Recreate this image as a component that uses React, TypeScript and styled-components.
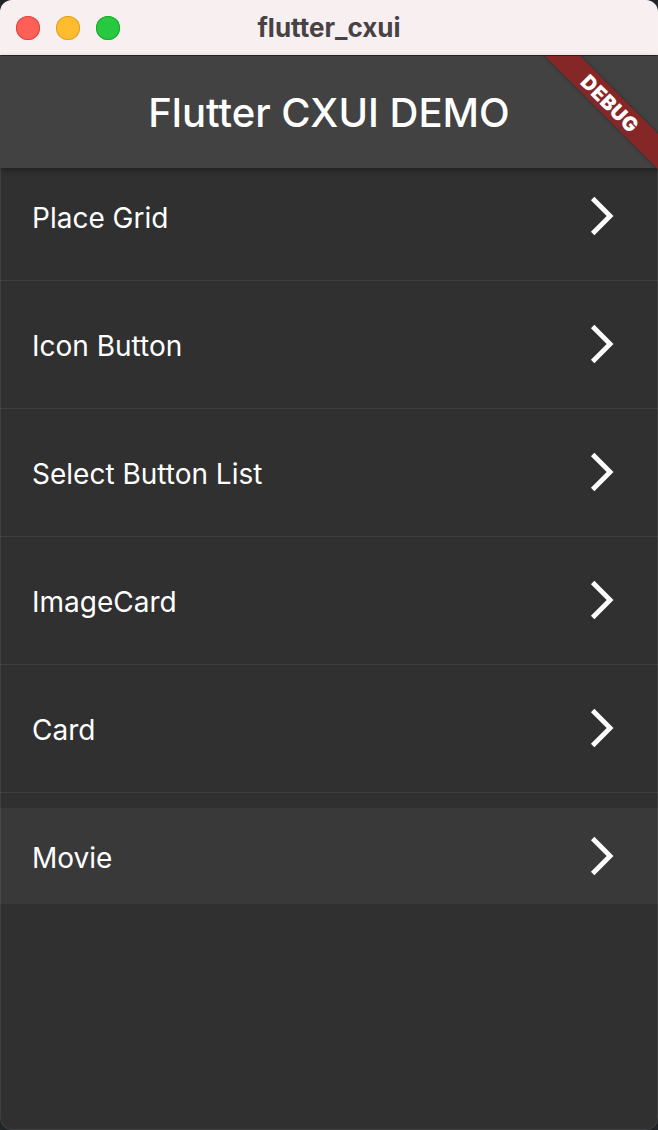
import React from 'react'
import styled, { createGlobalStyle } from 'styled-components'

const GlobalStyle = createGlobalStyle`
  html, body {
    margin: 0;
    padding: 0;
    background: #1f2529;
  }
  body {
    font-family: Inter, 'Noto Sans', sans-serif;
    -webkit-font-smoothing: antialiased;
  }
`

const Window = styled.div`
  position: relative;
  width: 658px;
  height: 1130px;
  border-radius: 12px;
  overflow: hidden;
  display: flex;
  flex-direction: column;
  background: #303030;

  &::after {
    content: '';
    position: absolute;
    inset: 0;
    border-radius: 12px;
    box-shadow: inset 0 0 0 1px rgba(255, 255, 255, 0.08);
    pointer-events: none;
  }
`

const TitleBar = styled.div`
  position: relative;
  height: 55px;
  flex-shrink: 0;
  background: #f8eff1;
  border-bottom: 1px solid #262626;
  display: flex;
  align-items: center;
  justify-content: center;
`

const Lights = styled.div`
  position: absolute;
  left: 16px;
  top: 16px;
  display: flex;
  gap: 16px;
`

const Light = styled.span<{ color: string; edge: string }>`
  width: 24px;
  height: 24px;
  border-radius: 50%;
  background: ${({ color }) => color};
  box-shadow: inset 0 0 0 1px ${({ edge }) => edge};
`

const WindowTitle = styled.div`
  font-size: 26px;
  font-weight: 700;
  color: #474345;
  margin-top: -1px;
`

const Content = styled.div`
  position: relative;
  flex: 1;
  display: flex;
  flex-direction: column;
`

const AppBar = styled.header`
  position: relative;
  z-index: 1;
  height: 112px;
  flex-shrink: 0;
  background: #424242;
  display: flex;
  align-items: center;
  justify-content: center;
  box-shadow: 0 2px 6px rgba(0, 0, 0, 0.35);
`

const AppTitle = styled.h1`
  margin: 0;
  font-size: 40px;
  font-weight: 500;
  color: #ffffff;
`

const List = styled.div`
  display: flex;
  flex-direction: column;
`

const Tile = styled.div<{ hovered?: boolean }>`
  height: 96px;
  padding: 0 33px 0 32px;
  display: flex;
  align-items: center;
  justify-content: space-between;
  background: ${({ hovered }) => (hovered ? '#393939' : 'transparent')};
`

const TileLabel = styled.span`
  font-size: 28px;
  color: #ffffff;
  padding-top: 4px;
`

const Separator = styled.div`
  height: 32px;
  display: flex;
  align-items: center;

  &::before {
    content: '';
    flex: 1;
    height: 1px;
    background: #3d3d3d;
  }
`

const BannerClip = styled.div`
  position: absolute;
  top: 0;
  right: 0;
  width: 120px;
  height: 120px;
  overflow: hidden;
  z-index: 2;
  pointer-events: none;
`

const Ribbon = styled.div`
  position: absolute;
  left: -28px;
  top: 35px;
  width: 200px;
  height: 25px;
  transform: rotate(45deg);
  background: #852727;
  box-shadow: 0 0 4px rgba(0, 0, 0, 0.35);
  display: flex;
  align-items: center;
  justify-content: center;
  color: #ffffff;
  font-size: 20px;
  font-weight: 900;
  letter-spacing: 0.5px;
`

const Chevron = () => (
  <svg width="46" height="46" viewBox="0 0 24 24" fill="#ffffff">
    <path d="M6.23 20.23 8 22l10-10L8 2 6.23 3.77 14.46 12z" />
  </svg>
)

const items = ['Place Grid', 'Icon Button', 'Select Button List', 'ImageCard', 'Card', 'Movie']

export default function App() {
  return (
    <>
      <GlobalStyle />
      <Window>
        <TitleBar>
          <Lights>
            <Light color="#fe5f57" edge="#e0443e" />
            <Light color="#febc2e" edge="#dea123" />
            <Light color="#28c840" edge="#1aab29" />
          </Lights>
          <WindowTitle>flutter_cxui</WindowTitle>
        </TitleBar>
        <Content>
          <AppBar>
            <AppTitle>Flutter CXUI DEMO</AppTitle>
          </AppBar>
          <List>
            {items.map((item, i) => (
              <React.Fragment key={item}>
                {i > 0 && <Separator />}
                <Tile hovered={item === 'Movie'}>
                  <TileLabel>{item}</TileLabel>
                  <Chevron />
                </Tile>
              </React.Fragment>
            ))}
          </List>
          <BannerClip>
            <Ribbon>DEBUG</Ribbon>
          </BannerClip>
        </Content>
      </Window>
    </>
  )
}
